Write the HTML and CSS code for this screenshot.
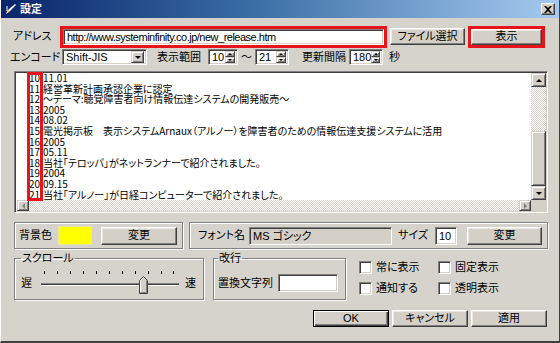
FILE: index.html
```html
<!DOCTYPE html>
<html lang="ja">
<head>
    <meta charset="UTF-8">
    <title>設定</title>
    <link rel="stylesheet" href="styles.css">
</head>
<body>
    <div class="window">
        <!-- タイトルバー -->
        <div class="titlebar">
            <svg class="title-icon" width="12" height="12" viewBox="0 0 12 12">
                <polygon points="1,11 3,7 10,1 11,2 5,8" fill="#fff"/>
                <polygon points="1,11 3,7 5,8" fill="#f0d040"/>
                <line x1="2" y1="3" x2="2" y2="8" stroke="#fff" stroke-width="1"/>
            </svg>
            <span class="title">設定</span>
            <span class="close-btn">
                <svg width="8" height="7" viewBox="0 0 8 7">
                    <path d="M0 0 L2 0 L4 2 L6 0 L8 0 L5 3.5 L8 7 L6 7 L4 5 L2 7 L0 7 L3 3.5 Z" fill="#000"/>
                </svg>
            </span>
        </div>

        <!-- アドレス -->
        <div class="row row-address">
            <span class="label label-address">アドレス</span>
            <div class="field field-address marked">http://www.systeminfinity.co.jp/new_release.htm</div>
            <button class="btn btn-file">ファイル選択</button>
            <button class="btn btn-show marked">表示</button>
        </div>

        <!-- エンコード・表示範囲・更新間隔 -->
        <div class="row row-options">
            <span class="label label-encode">エンコード</span>
            <div class="field combo">
                <span class="combo-text">Shift-JIS</span>
                <span class="raised combo-arrow"><i class="tri-down"></i></span>
            </div>
            <span class="label label-range">表示範囲</span>
            <div class="field spin spin-from">
                <span class="spin-text">10</span>
                <span class="spin-btns">
                    <span class="raised"><i class="tri-up small"></i></span>
                    <span class="raised"><i class="tri-down small"></i></span>
                </span>
            </div>
            <span class="label tilde">〜</span>
            <div class="field spin spin-to">
                <span class="spin-text">21</span>
                <span class="spin-btns">
                    <span class="raised"><i class="tri-up small"></i></span>
                    <span class="raised"><i class="tri-down small"></i></span>
                </span>
            </div>
            <span class="label label-interval">更新間隔</span>
            <div class="field spin spin-interval">
                <span class="spin-text">180</span>
                <span class="spin-btns">
                    <span class="raised"><i class="tri-up small"></i></span>
                    <span class="raised"><i class="tri-down small"></i></span>
                </span>
            </div>
            <span class="label label-sec">秒</span>
        </div>

        <!-- 表示内容 -->
        <div class="viewer">
            <div class="viewer-text">
                <div>10:11.01</div>
                <div>11:経営革新計画承認企業に認定</div>
                <div>12:〜テーマ:聴覚障害者向け情報伝達システムの開発販売〜</div>
                <div>13:2005</div>
                <div>14:08.02</div>
                <div>15:電光掲示板　表示システムArnaux（アルノー）を障害者のための情報伝達支援システムに活用</div>
                <div>16:2005</div>
                <div>17:05.11</div>
                <div>18:当社「テロッパ」がネットランナーで紹介されました。</div>
                <div>19:2004</div>
                <div>20:09.15</div>
                <div>21:当社「アルノー」が日経コンピューターで紹介されました。</div>
            </div>
            <div class="vscroll">
                <span class="raised sb-btn"><i class="tri-up"></i></span>
                <span class="sb-track"></span>
                <span class="raised sb-thumb"></span>
                <span class="raised sb-btn"><i class="tri-down"></i></span>
            </div>
            <div class="hscroll">
                <span class="raised sb-btn-h"><i class="tri-left"></i></span>
                <span class="sb-track"></span>
                <span class="raised sb-btn-h"><i class="tri-right"></i></span>
            </div>
            <div class="sb-corner"></div>
            <div class="line-mark"></div>
        </div>

        <!-- 背景色・フォント -->
        <div class="row row-groups">
            <div class="group group-color">
                <span class="label">背景色</span>
                <span class="swatch"></span>
                <button class="btn btn-change">変更</button>
            </div>
            <div class="group group-font">
                <span class="label label-fontname">フォント名</span>
                <div class="field field-font">MS ゴシック</div>
                <span class="label label-size">サイズ</span>
                <div class="field field-size">10</div>
                <button class="btn btn-change">変更</button>
            </div>
        </div>

        <!-- スクロール・改行・チェック -->
        <div class="row row-lower">
            <fieldset class="frame frame-scroll">
                <legend>スクロール</legend>
                <div class="frame-body">
                    <span class="label">遅</span>
                    <svg class="slider" width="153" height="26" viewBox="0 0 153 26">
                        <g stroke="#000" stroke-width="1">
                            <line x1="12.5" y1="1" x2="12.5" y2="4"/>
                            <line x1="25.5" y1="1" x2="25.5" y2="4"/>
                            <line x1="38.5" y1="1" x2="38.5" y2="4"/>
                            <line x1="51.5" y1="1" x2="51.5" y2="4"/>
                            <line x1="64.5" y1="1" x2="64.5" y2="4"/>
                            <line x1="77.5" y1="1" x2="77.5" y2="4"/>
                            <line x1="90.5" y1="1" x2="90.5" y2="4"/>
                            <line x1="103.5" y1="1" x2="103.5" y2="4"/>
                            <line x1="116.5" y1="1" x2="116.5" y2="4"/>
                            <line x1="129.5" y1="1" x2="129.5" y2="4"/>
                            <line x1="141.5" y1="1" x2="141.5" y2="4"/>
                        </g>
                        <line x1="9" y1="13.5" x2="147" y2="13.5" stroke="#808080"/>
                        <line x1="9" y1="14.5" x2="147" y2="14.5" stroke="#404040"/>
                        <line x1="9" y1="15.5" x2="147" y2="15.5" stroke="#fff"/>
                        <polygon points="107.5,23.5 107.5,10.5 111.5,6.5 115.5,10.5 115.5,23.5" fill="#d4d0c8" stroke="#404040"/>
                        <polyline points="108.5,22.5 108.5,10.5 111.5,7.5" fill="none" stroke="#fff"/>
                        <polyline points="114.5,10.5 114.5,22.5 108.5,22.5" fill="none" stroke="#808080"/>
                    </svg>
                    <span class="label">速</span>
                </div>
            </fieldset>
            <fieldset class="frame frame-break">
                <legend>改行</legend>
                <div class="frame-body">
                    <span class="label label-replace">置換文字列</span>
                    <div class="field field-replace"></div>
                </div>
            </fieldset>
            <div class="checks">
                <label class="check"><span class="check-box"></span>常に表示</label>
                <label class="check"><span class="check-box"></span>固定表示</label>
                <label class="check"><span class="check-box"></span>通知する</label>
                <label class="check"><span class="check-box"></span>透明表示</label>
            </div>
        </div>

        <!-- ボタン -->
        <div class="row row-buttons">
            <button class="btn btn-dialog btn-default">OK</button>
            <button class="btn btn-dialog">キャンセル</button>
            <button class="btn btn-dialog">適用</button>
        </div>
    </div>
</body>
</html>
```

FILE: styles.css
```css
body {
    margin: 0;
    background-color: #d6d3cd;
    font-family: "Liberation Sans", "Noto Sans CJK JP", sans-serif;
    font-size: 11px;
    color: #000;
    font-feature-settings: "palt";
}

.window {
    width: 560px;
    height: 343px;
    box-sizing: border-box;
    background-color: #d6d3cd;
    border-bottom: 2px solid #404040;
    border-right: 1px solid #404040;
    border-left: 1px solid #fff;
    overflow: hidden;
}

/* タイトルバー */
.titlebar {
    display: flex;
    align-items: center;
    height: 18px;
    padding: 0 4px 0 4px;
    background: linear-gradient(to right, #0a246a, #3a6ea5 45%, #a6caf0);
}

.title-icon {
    margin-right: 3px;
}

.title {
    color: #fff;
    font-weight: bold;
    font-size: 11px;
    line-height: 13px;
}

.close-btn {
    display: flex;
    align-items: center;
    justify-content: center;
    margin-left: auto;
    width: 14px;
    height: 12px;
    box-sizing: border-box;
    background-color: #d4d0c8;
    border: 1px solid;
    border-color: #fff #404040 #404040 #fff;
    box-shadow: inset -1px -1px #808080;
}

/* 行 */
.row {
    display: flex;
    align-items: center;
}

.label {
    white-space: nowrap;
    line-height: 13px;
}

.field {
    box-sizing: border-box;
    background-color: #fff;
    border: 1px solid;
    border-color: #808080 #fff #fff #808080;
    box-shadow: inset 1px 1px #404040, inset -1px -1px #d4d0c8;
    line-height: 12px;
    white-space: nowrap;
    overflow: hidden;
}

.raised {
    display: flex;
    align-items: center;
    justify-content: center;
    box-sizing: border-box;
    background-color: #d4d0c8;
    border: 1px solid;
    border-color: #d4d0c8 #404040 #404040 #d4d0c8;
    box-shadow: inset 1px 1px #fff, inset -1px -1px #808080;
}

.btn {
    box-sizing: border-box;
    height: 17px;
    padding: 0;
    font: inherit;
    font-size: 11px;
    line-height: 13px;
    color: #000;
    background-color: #d4d0c8;
    border: 1px solid;
    border-color: #fff #404040 #404040 #fff;
    box-shadow: inset -1px -1px #808080, inset 1px 1px #ece9e4;
}

.marked {
    outline: 3px solid #e8141c;
}

/* 三角形 */
.tri-up, .tri-down, .tri-left, .tri-right {
    display: block;
    width: 0;
    height: 0;
}

.tri-up {
    border-left: 3px solid transparent;
    border-right: 3px solid transparent;
    border-bottom: 3px solid #000;
}

.tri-down {
    border-left: 3px solid transparent;
    border-right: 3px solid transparent;
    border-top: 3px solid #000;
}

.tri-up.small, .tri-down.small {
    border-left-width: 2px;
    border-right-width: 2px;
    border-top-width: 2px;
    border-bottom-width: 2px;
}

.tri-up.small {
    border-top: none;
}

.tri-down.small {
    border-bottom: none;
}

.tri-left {
    border-top: 3px solid transparent;
    border-bottom: 3px solid transparent;
    border-right: 3px solid #808080;
}

.tri-right {
    border-top: 3px solid transparent;
    border-bottom: 3px solid transparent;
    border-left: 3px solid #808080;
}

/* アドレス行 */
.row-address {
    height: 17px;
    margin-top: 10px;
    padding-left: 12px;
}

.label-address {
    width: 50px;
}

.field-address {
    width: 321px;
    height: 16px;
    padding: 1px 3px 0;
    letter-spacing: -0.5px;
}

.btn-file {
    width: 75px;
    margin-left: 6px;
}

.btn-show {
    width: 71px;
    height: 16px;
    margin-left: 6px;
}

/* エンコード行 */
.row-options {
    height: 16px;
    margin-top: 4px;
    padding-left: 9px;
}

.label-encode {
    width: 52px;
}

.combo {
    display: flex;
    align-items: center;
    width: 85px;
    height: 16px;
    padding: 2px 2px 2px 3px;
}

.combo-text {
    flex: 1;
}

.combo-arrow {
    width: 13px;
    height: 12px;
}

.label-range {
    margin-left: 10px;
    width: 51px;
}

.spin {
    display: flex;
    align-items: center;
    height: 16px;
    padding: 2px 2px 2px 3px;
}

.spin-text {
    flex: 1;
}

.spin-btns {
    display: flex;
    flex-direction: column;
    width: 10px;
    height: 12px;
}

.spin-btns .raised {
    height: 6px;
}

.spin-from {
    width: 30px;
}

.tilde {
    width: 17px;
    text-align: center;
}

.spin-to {
    width: 34px;
}

.label-interval {
    margin-left: 13px;
    width: 47px;
}

.spin-interval {
    width: 34px;
}

.label-sec {
    margin-left: 6px;
}

/* 表示内容 */
.viewer {
    position: relative;
    display: grid;
    grid-template-columns: 1fr 15px;
    grid-template-rows: 1fr 11px;
    width: 534px;
    height: 142px;
    margin: 6px 0 0 13px;
    box-sizing: border-box;
    background-color: #fff;
    border: 1px solid;
    border-color: #808080 #fff #fff #808080;
    box-shadow: inset 1px 1px #404040, inset -1px -1px #d4d0c8;
    padding: 1px 1px 1px 2px;
}

.viewer-text {
    padding: 0 0 0 12px;
    font-family: "Noto Sans CJK JP", sans-serif;
    font-size: 10px;
    line-height: 10.6px;
    white-space: nowrap;
}

.vscroll {
    display: flex;
    flex-direction: column;
}

.sb-btn {
    height: 14px;
    flex: none;
}

.sb-track {
    flex: 1;
    background: repeating-conic-gradient(#fff 0 25%, #d4d0c8 0 50%) 0 0 / 2px 2px;
}

.sb-thumb {
    height: 55px;
    flex: none;
}

.hscroll {
    display: flex;
}

.sb-btn-h {
    width: 12px;
    flex: none;
}

.sb-corner {
    background-color: #d4d0c8;
}

.line-mark {
    position: absolute;
    left: 12px;
    top: 0;
    width: 10px;
    height: 123px;
    border: 3px solid #e8141c;
}

/* 背景色・フォント */
.row-groups {
    margin-top: 9px;
    padding-left: 13px;
    gap: 6px;
}

.group {
    display: flex;
    align-items: center;
    box-sizing: border-box;
    height: 27px;
    border: 1px solid #808080;
    box-shadow: inset 1px 1px #fff, 1px 1px #fff;
}

.group-color {
    width: 169px;
    padding-left: 4px;
}

.swatch {
    width: 34px;
    height: 19px;
    margin-left: 6px;
    background-color: #ffff00;
    box-sizing: border-box;
    border: 1px solid #e8e8a0;
}

.btn-change {
    width: 76px;
    height: 18px;
    margin-left: 9px;
}

.group-font {
    width: 359px;
    padding-left: 8px;
}

.label-fontname {
    width: 51px;
}

.field-font {
    width: 143px;
    height: 18px;
    padding: 2px 3px;
    background-color: #d4d0c8;
}

.label-size {
    width: 37px;
    margin-left: 6px;
}

.field-size {
    width: 22px;
    height: 18px;
    padding: 2px 3px;
}

.group-font .btn-change {
    width: 75px;
    margin-left: 10px;
}

/* スクロール・改行 */
.row-lower {
    align-items: flex-start;
    margin-top: 4px;
    padding-left: 13px;
}

.frame {
    margin: 0;
    padding: 0 5px 3px 6px;
    border: 1px solid #808080;
    box-shadow: inset 1px 1px #fff, 1px 1px #fff;
}

.frame legend {
    padding: 0 1px;
    line-height: 11px;
}

.frame-body {
    display: flex;
    align-items: center;
    height: 26px;
    margin-top: 6px;
}

.frame-scroll {
    width: 190px;
    box-sizing: border-box;
}

.slider {
    display: block;
}

.frame-break {
    width: 133px;
    box-sizing: border-box;
    margin-left: 9px;
    padding-left: 4px;
}

.label-replace {
    width: 60px;
}

.field-replace {
    width: 60px;
    height: 18px;
}

.checks {
    display: grid;
    grid-template-columns: 79px 79px;
    row-gap: 8px;
    margin: 8px 0 0 13px;
}

.check {
    display: flex;
    align-items: center;
    height: 13px;
    line-height: 13px;
}

.check-box {
    width: 11px;
    height: 11px;
    margin-right: 4px;
    background-color: #fff;
    border: 1px solid;
    border-color: #808080 #fff #fff #808080;
    box-shadow: inset 1px 1px #404040, inset -1px -1px #d4d0c8;
}

/* ボタン */
.row-buttons {
    justify-content: flex-end;
    gap: 3px;
    margin-top: 10px;
    padding-right: 12px;
}

.btn-dialog {
    width: 76px;
}

.btn-default {
    border-color: #000;
    box-shadow: inset 1px 1px #fff, inset -1px -1px #404040, inset -2px -2px #808080;
}
```
